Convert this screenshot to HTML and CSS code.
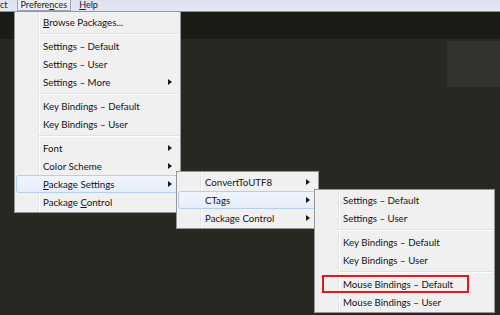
FILE: index.html
```html
<!DOCTYPE html>
<html lang="en">
<head>
    <meta charset="UTF-8">
    <title>Preferences menu</title>
    <link rel="stylesheet" href="styles.css">
</head>
<body>
    <div class="window">
        <div class="menubar">
            <span class="barItem">ct</span>
            <span class="barItem open">Prefere<u>n</u>ces</span>
            <span class="barItem"><u>H</u>elp</span>
        </div>
        <div class="editor">
            <div class="tabs"></div>
            <div class="pane">
                <div class="minimap"></div>
            </div>
        </div>

        <!-- Preferences menu -->
        <div class="menu mainMenu">
            <div class="item"><span><u>B</u>rowse Packages...</span></div>
            <div class="sep"></div>
            <div class="item"><span>Settings – Default</span></div>
            <div class="item"><span>Settings – User</span></div>
            <div class="item sub"><span>Settings – More</span></div>
            <div class="sep"></div>
            <div class="item"><span>Key Bindings – Default</span></div>
            <div class="item"><span>Key Bindings – User</span></div>
            <div class="sep"></div>
            <div class="item sub"><span>Font</span></div>
            <div class="item sub"><span>Color Scheme</span></div>
            <div class="item sub hover"><span><u>P</u>ackage Settings</span></div>
            <div class="item"><span>Package <u>C</u>ontrol</span></div>
        </div>

        <!-- Package Settings -->
        <div class="menu pkgMenu">
            <div class="item sub"><span>ConvertToUTF8</span></div>
            <div class="item sub hover"><span>CTags</span></div>
            <div class="item sub"><span>Package Control</span></div>
        </div>

        <!-- CTags -->
        <div class="menu ctagsMenu">
            <div class="item"><span>Settings – Default</span></div>
            <div class="item"><span>Settings – User</span></div>
            <div class="sep"></div>
            <div class="item"><span>Key Bindings – Default</span></div>
            <div class="item"><span>Key Bindings – User</span></div>
            <div class="sep"></div>
            <div class="item marked"><span>Mouse Bindings – Default</span></div>
            <div class="item"><span>Mouse Bindings – User</span></div>
        </div>
    </div>
</body>
</html>
```

FILE: styles.css
```css
html, body {
    margin: 0;
    padding: 0;
}

body {
    width: 500px;
    height: 315px;
    overflow: hidden;
    font-family: Lato, "Noto Sans", sans-serif;
    font-size: 9.7px;
    color: #141414;
}

.window {
    position: relative;
    width: 500px;
    height: 315px;
    display: flex;
    flex-direction: column;
    background: #282823;
}

.menubar {
    height: 11px;
    display: flex;
    align-items: stretch;
    background: linear-gradient(#dfe2f1, #e3e6f4);
    border-bottom: 1px solid #8c8f99;
    font-size: 9px;
    line-height: 10px;
    color: #202020;
}

.barItem {
    padding: 0 4px;
    box-sizing: border-box;
    white-space: nowrap;
}

.barItem:first-child {
    padding-left: 0;
    margin-right: 5px;
}

.barItem.open {
    border: 1px solid #9da1b3;
    border-top: none;
    background: #eceef5;
    padding: 0 3px;
    margin-right: 4px;
}

.editor {
    flex: 1;
    display: flex;
    flex-direction: column;
}

.tabs {
    height: 27px;
    background: #1b1b16;
}

.pane {
    flex: 1;
    display: flex;
    justify-content: flex-end;
    align-items: flex-start;
    padding-top: 2px;
}

.minimap {
    width: 53px;
    height: 46px;
    background: #32322e;
}

/* menus */
.menu {
    position: absolute;
    box-sizing: border-box;
    border: 1px solid #979797;
    padding: 1px;
    background:
        linear-gradient(to right, transparent 23px, #e2e3e3 23px, #e2e3e3 24px, #fff 24px, #fff 25px, transparent 25px),
        #f0f0f0;
}

.mainMenu {
    left: 14px;
    top: 11px;
    width: 167px;
}

.pkgMenu {
    left: 176px;
    top: 171px;
    width: 143px;
}

.ctagsMenu {
    left: 314px;
    top: 189px;
    width: 181px;
}

.item {
    position: relative;
    height: 18px;
    box-sizing: border-box;
    display: flex;
    align-items: center;
    padding-left: 26px;
    padding-right: 6px;
    border: 1px solid transparent;
    border-radius: 3px;
    white-space: nowrap;
}

.item.sub::after {
    content: "";
    margin-left: auto;
    border-left: 4px solid #1a1a1a;
    border-top: 3.5px solid transparent;
    border-bottom: 3.5px solid transparent;
}

.item.hover {
    border-color: #b3cff0;
    background: linear-gradient(#f1f6fd, #e4eefb);
}

.item.marked::before {
    content: "";
    position: absolute;
    left: 5px;
    top: -1px;
    width: 147px;
    height: 18px;
    box-sizing: border-box;
    border: 2px solid #e8161c;
}

.sep {
    height: 6px;
    margin-left: 22px;
    background: linear-gradient(transparent 2px, #e0e0e0 2px, #e0e0e0 3px, #fff 3px, #fff 4px, transparent 4px);
}

u {
    text-decoration: underline;
    text-underline-offset: 1px;
}
```
